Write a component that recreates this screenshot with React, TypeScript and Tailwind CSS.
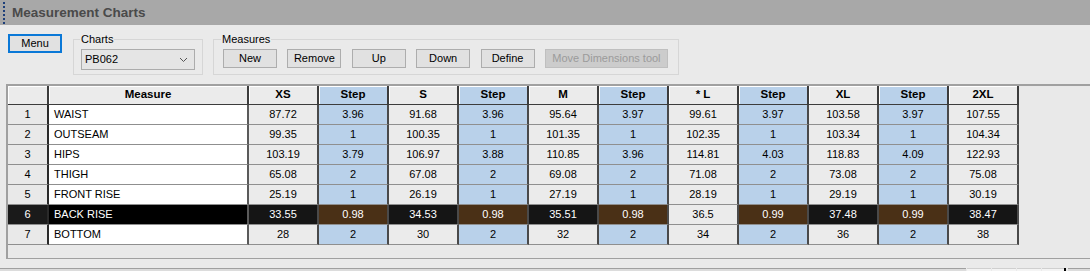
import React from "react";

const headers = ["XS", "Step", "S", "Step", "M", "Step", "* L", "Step", "XL", "Step", "2XL"];

const rows: [string, string[]][] = [
  ["WAIST", ["87.72", "3.96", "91.68", "3.96", "95.64", "3.97", "99.61", "3.97", "103.58", "3.97", "107.55"]],
  ["OUTSEAM", ["99.35", "1", "100.35", "1", "101.35", "1", "102.35", "1", "103.34", "1", "104.34"]],
  ["HIPS", ["103.19", "3.79", "106.97", "3.88", "110.85", "3.96", "114.81", "4.03", "118.83", "4.09", "122.93"]],
  ["THIGH", ["65.08", "2", "67.08", "2", "69.08", "2", "71.08", "2", "73.08", "2", "75.08"]],
  ["FRONT RISE", ["25.19", "1", "26.19", "1", "27.19", "1", "28.19", "1", "29.19", "1", "30.19"]],
  ["BACK RISE", ["33.55", "0.98", "34.53", "0.98", "35.51", "0.98", "36.5", "0.99", "37.48", "0.99", "38.47"]],
  ["BOTTOM", ["28", "2", "30", "2", "32", "2", "34", "2", "36", "2", "38"]],
];

const SELECTED = 5;

function Btn({ children, w = "w-[54px]", disabled = false }: { children: React.ReactNode; w?: string; disabled?: boolean }) {
  return (
    <div
      className={`${w} h-[19px] flex items-center justify-center border ${
        disabled ? "bg-[#cccccc] border-[#bfbfbf] text-[#9b9b9b]" : "bg-[#e1e1e1] border-[#adadad] text-black"
      } text-[11px]`}
    >
      {children}
    </div>
  );
}

export default function App() {
  return (
    <div
      className="w-[1090px] h-[271px] bg-[#eaeaea] overflow-hidden flex flex-col"
      style={{ fontFamily: '"Liberation Sans", Arial, sans-serif' }}
    >
      {/* Title bar */}
      <div className="h-[25px] bg-[#a8a8a8] flex items-center shrink-0">
        <div className="ml-[3px] h-[22px] border-l-2 border-dotted border-[#1d3f7a]" />
        <div className="ml-[7px] text-[13.5px] font-bold text-[#4a4a4a] leading-none">Measurement Charts</div>
      </div>

      {/* Toolbar */}
      <div className="h-[59px] shrink-0 flex items-start pl-[8px] pt-[9px]">
        <div className="w-[54px] h-[19px] border-2 border-[#0a78d7] bg-[#e1e1e1] flex items-center justify-center text-[11px] text-black">
          Menu
        </div>

        <div className="relative ml-[11px] mt-[5px] w-[130px] h-[36px] border border-[#d6d6d6]">
          <div className="absolute left-[6px] top-[-8px] px-[1px] bg-[#eaeaea] text-[11px] leading-[14px] text-black">Charts</div>
          <div className="absolute left-[7px] top-[9px] w-[114px] h-[21px] bg-[#e5e5e5] border border-[#acacac] flex items-center justify-between pl-[3px] pr-[6px]">
            <span className="text-[11px] text-black">PB062</span>
            <svg width="9" height="6" viewBox="0 0 9 6">
              <polyline points="1,1 4.5,4.5 8,1" fill="none" stroke="#555" strokeWidth="1" />
            </svg>
          </div>
        </div>

        <div className="relative ml-[10px] mt-[5px] w-[466px] h-[36px] border border-[#d6d6d6]">
          <div className="absolute left-[7px] top-[-8px] px-[1px] bg-[#eaeaea] text-[11px] leading-[14px] text-black">Measures</div>
          <div className="absolute left-[9px] top-[9px] flex gap-[10.4px]">
            <Btn>New</Btn>
            <Btn>Remove</Btn>
            <Btn>Up</Btn>
            <Btn>Down</Btn>
            <Btn>Define</Btn>
            <Btn w="w-[123px]" disabled>
              Move Dimensions tool
            </Btn>
          </div>
        </div>
      </div>

      {/* Grid container */}
      <div className="ml-[6px] h-[175px] shrink-0 border-l-2 border-t-2 border-b border-[#a0a0a0] bg-[#e9e9e9]">
        <div className="grid grid-cols-[41px_200px_repeat(11,70px)] w-[1011px] text-[11px] leading-none">
          {/* header */}
          <div className="h-[19px] bg-[#ebebeb] border-r-2 border-b border-[#3c3c3c] shadow-[inset_1px_1px_0_#ffffff]" />
          <div className="h-[19px] bg-[#ebebeb] border-r-2 border-b border-[#3c3c3c] shadow-[inset_1px_1px_0_#ffffff] flex items-center justify-center font-bold text-[11.5px] text-black">
            Measure
          </div>
          {headers.map((h, i) => (
            <div
              key={"h" + i}
              className={`h-[19px] ${i % 2 === 1 ? "bg-[#b9d1ea]" : "bg-[#ebebeb]"} border-r-2 border-b border-[#3c3c3c] shadow-[inset_1px_1px_0_#ffffff] flex items-center justify-center font-bold text-[11.5px] text-black`}
            >
              {h}
            </div>
          ))}

          {rows.map(([name, vals], r) => {
            const sel = r === SELECTED;
            return (
              <React.Fragment key={r}>
                <div
                  className={`h-[20px] border-r-2 border-b border-r-[#2a2a2a] border-b-[#8f8f8f] flex items-center justify-center ${
                    sel ? "bg-[#1a1a1a] text-white" : "bg-[#e9e9e9] text-black"
                  }`}
                >
                  {r + 1}
                </div>
                <div
                  className={`h-[20px] border-r-2 border-b border-r-[#5a5a5a] border-b-[#8f8f8f] flex items-center pl-[5px] ${
                    sel ? "bg-black text-white" : "bg-white text-black"
                  }`}
                >
                  {name}
                </div>
                {vals.map((v, c) => {
                  const step = c % 2 === 1;
                  const hl = sel && c !== 6;
                  const bg = hl
                    ? step
                      ? "bg-[#4a3016] text-white"
                      : "bg-[#151515] text-white"
                    : step
                    ? "bg-[#b9d1ea] text-black"
                    : "bg-[#ebebeb] text-black";
                  return (
                    <div
                      key={c}
                      className={`h-[20px] border-r-2 border-b border-r-[#4a4a4a] border-b-[#8f8f8f] flex items-center justify-center ${bg}`}
                    >
                      {v}
                    </div>
                  );
                })}
              </React.Fragment>
            );
          })}
        </div>
      </div>

      {/* Status strip */}
      <div className="mt-[9px] h-[3px] flex shrink-0">
        <div className="w-[966px] border-t border-[#a0a0a0] bg-[#dcdcdc]" />
        <div className="w-[24px] ml-[1px] bg-[#f4f4f4] border-t border-[#cfcfcf]" />
        <div className="w-[24px] ml-[1px] bg-[#f4f4f4] border-t border-[#cfcfcf]" />
        <div className="w-[24px] ml-[1px] bg-[#f4f4f4] border-t border-[#cfcfcf]" />
        <div className="w-[22px] ml-[1px] bg-[#f4f4f4] border-t border-[#cfcfcf]" />
        <div className="w-[2px] bg-black" />
        <div className="flex-1 ml-[2px] bg-[#dcdcdc] border-t border-[#a0a0a0]" />
      </div>
    </div>
  );
}
